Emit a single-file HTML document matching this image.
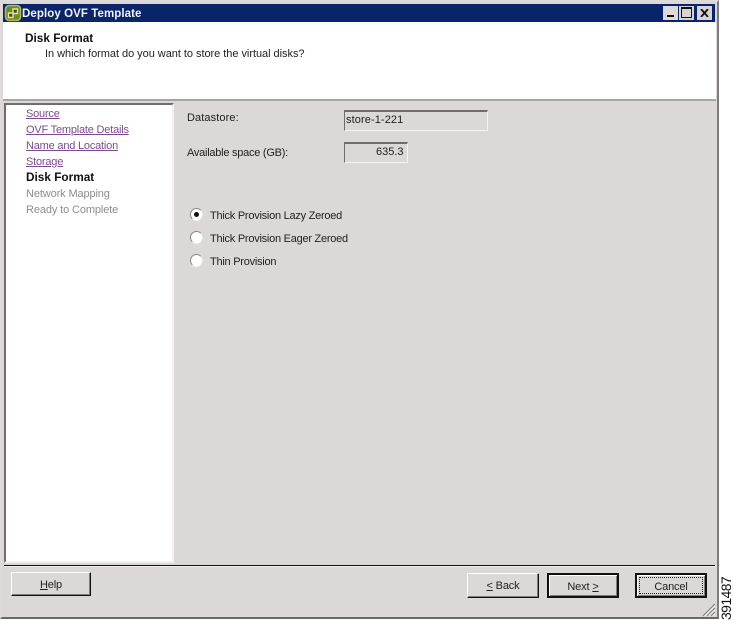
<!DOCTYPE html>
<html><head><meta charset="utf-8"><style>
html,body{margin:0;padding:0;background:#fff;}
body{position:relative;width:733px;height:620px;overflow:hidden;font-family:"Liberation Sans",sans-serif;font-size:11px;color:#111;}
.a{position:absolute;white-space:nowrap;line-height:14px;}
.box{position:absolute;box-sizing:border-box;}
.btn{position:absolute;box-sizing:border-box;background:#dcd8d8;border:1px solid;border-color:#fff #111 #111 #fff;box-shadow:inset -1px -1px 0 #807c7c;text-align:center;line-height:25px;font-size:11px;letter-spacing:-.15px;color:#222;}
.lnk{color:#7d4a8f;text-decoration:underline;font-size:11px;letter-spacing:-.2px;}
.gr{color:#8f8c8c;font-size:11px;letter-spacing:-.12px;}
.lb{font-size:11px;letter-spacing:-.25px;color:#222;}
.wb{position:absolute;top:6px;width:15px;height:14px;background:#d8d4d4;box-sizing:border-box;}
.r{position:absolute;width:13px;height:13px;border-radius:50%;left:190px;background:#fff;box-sizing:border-box;border:1px solid;border-color:#8a8686 #e8e6e6 #f4f2f2 #8a8686;}
</style></head><body>
<div class="box" style="left:0;top:0;width:719px;height:619px;background:#dcd8d8;border:2px solid;border-color:#dedada #807c7c #6b6868 #dedada;"></div>
<div class="box" style="left:3px;top:4px;width:712px;height:18px;background:#0a246a;"></div>
<svg class="box" style="left:4px;top:4px" width="18" height="18" viewBox="0 0 18 18"><rect x="1.5" y="1.5" width="15" height="15" rx="3.5" fill="#6f8a2a" stroke="#a8bd5c" stroke-width="1.6"/><path d="M9 5h4.5v4.5H9zM4.5 9H9v4.5H4.5z" fill="#3f4a14" stroke="#ecdf9a" stroke-width="1.4"/></svg>
<div class="a" style="left:22px;top:7px;color:#f2f2f6;font-weight:bold;font-size:11.5px;letter-spacing:.08px;">Deploy OVF Template</div>
<div class="wb" style="left:663px;background:#dedada;"><div class="box" style="left:4px;top:9px;width:7px;height:2px;background:#111;"></div></div>
<div class="wb" style="left:679px;"><div class="box" style="left:2px;top:1px;width:11px;height:11px;border:1px solid #111;border-top-width:2px;"></div></div>
<div class="wb" style="left:697px;"><svg style="position:absolute;left:3px;top:3px" width="9" height="8"><path d="M1 0l7 8M8 0L1 8" stroke="#111" stroke-width="1.8"/></svg></div>
<div class="box" style="left:3px;top:22px;width:713px;height:77px;background:#fff;"></div>
<div class="box" style="left:3px;top:99px;width:713px;height:2px;background:#a8a5a5;"></div>
<div class="a" style="left:25px;top:31px;font-weight:bold;font-size:11.8px;color:#111;">Disk Format</div>
<div class="a" style="left:45px;top:47px;font-size:11px;letter-spacing:-.04px;color:#222;">In which format do you want to store the virtual disks?</div>

<div class="box" style="left:4px;top:103px;width:170px;height:460px;background:#fff;border:1px solid;border-width:2px 2px 2px 2px;border-color:#6f6c6c #f2f0f0 #f2f0f0 #6f6c6c;"></div>
<div class="a lnk" style="left:26px;top:107px;">Source</div>
<div class="a lnk" style="left:26px;top:123px;">OVF Template Details</div>
<div class="a lnk" style="left:26px;top:139px;">Name and Location</div>
<div class="a lnk" style="left:26px;top:155px;">Storage</div>
<div class="a" style="left:26px;top:170px;font-weight:bold;font-size:11.8px;color:#111;">Disk Format</div>
<div class="a gr" style="left:26px;top:187px;">Network Mapping</div>
<div class="a gr" style="left:26px;top:203px;">Ready to Complete</div>

<div class="a lb" style="left:187px;top:111px;letter-spacing:.1px;">Datastore:</div>
<div class="a lb" style="left:187px;top:146px;">Available space (GB):</div>
<div class="box" style="left:344px;top:110px;width:144px;height:21px;border:1px solid;border-width:2px 1px 1px 1px;border-color:#6f6c6c #f4f2f2 #f4f2f2 #6f6c6c;"></div>
<div class="a lb" style="left:346px;top:113px;letter-spacing:.1px;">store-1-221</div>
<div class="box" style="left:344px;top:142px;width:64px;height:21px;border:1px solid;border-width:2px 1px 1px 1px;border-color:#6f6c6c #f4f2f2 #f4f2f2 #6f6c6c;"></div>
<div class="a lb" style="left:376px;top:145px;letter-spacing:0;">635.3</div>

<div class="r" style="top:208px;"><div class="box" style="left:3px;top:3px;width:5px;height:5px;border-radius:50%;background:#111;"></div></div>
<div class="r" style="top:231px;"></div>
<div class="r" style="top:254px;"></div>
<div class="a lb" style="left:210px;top:209px;">Thick Provision Lazy Zeroed</div>
<div class="a lb" style="left:210px;top:232px;">Thick Provision Eager Zeroed</div>
<div class="a lb" style="left:210px;top:255px;">Thin Provision</div>

<div class="box" style="left:4px;top:565px;width:711px;height:1px;background:#111;"></div>
<div class="box" style="left:4px;top:566px;width:711px;height:1px;background:#f0eeee;"></div>
<div class="btn" style="left:11px;top:572px;width:80px;height:24px;line-height:24px;"><u>H</u>elp</div>
<div class="btn" style="left:467px;top:573px;width:72px;height:25px;"><u>&lt;</u> Back</div>
<div class="btn" style="left:547px;top:573px;width:72px;height:25px;border:2px solid #111;line-height:24px;box-shadow:inset 1px 1px 0 #fff,inset -1px -1px 0 #807c7c;">Next <u>&gt;</u></div>
<div class="btn" style="left:635px;top:573px;width:72px;height:25px;border:2px solid #111;line-height:24px;box-shadow:inset 1px 1px 0 #fff,inset -1px -1px 0 #807c7c;">Cancel<div class="box" style="left:2px;top:2px;width:64px;height:17px;border:1px dotted #222;"></div></div>
<svg class="box" style="left:702px;top:603px" width="14" height="14"><path d="M1 13L13 1M5 13L13 5M9 13l4-4" stroke="#7f7c7c" stroke-width="1.2"/><path d="M2.5 13L13 2.5M6.5 13L13 6.5M10.5 13l2.5-2.5" stroke="#fff" stroke-width=".8"/></svg>
<div class="a" style="left:719px;top:620px;transform-origin:0 0;transform:rotate(-90deg);font-size:14px;line-height:14px;letter-spacing:-.6px;color:#111;">391487</div>
</body></html>
